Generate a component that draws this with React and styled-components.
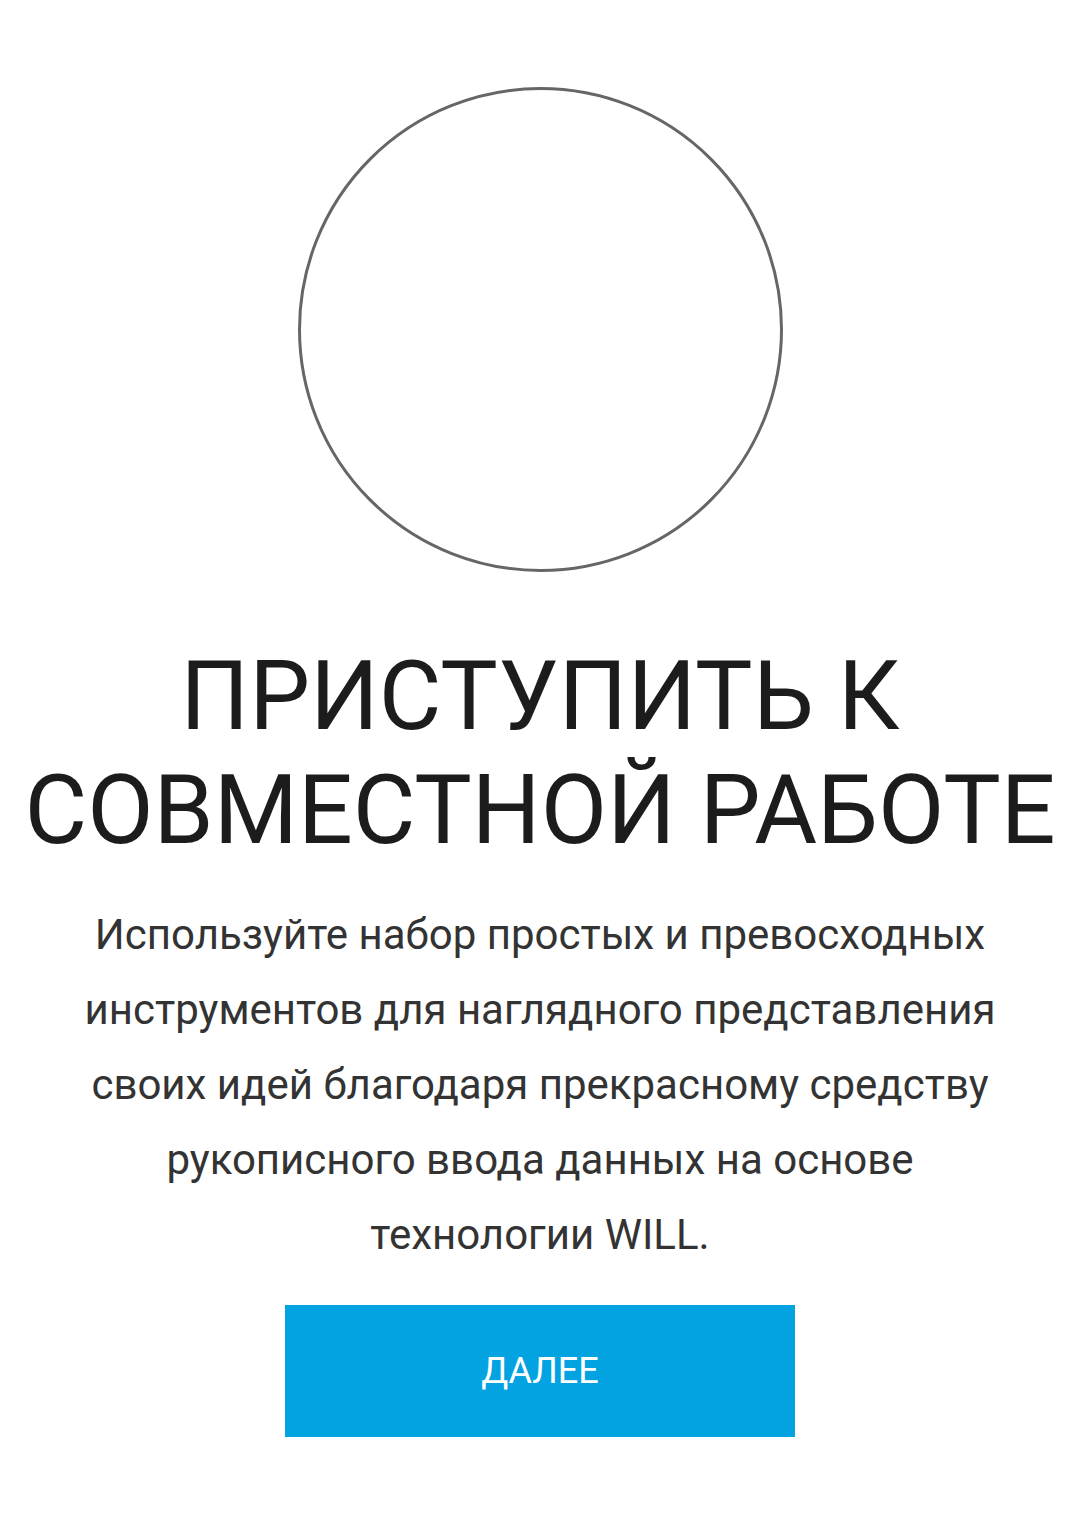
import React from "react";
import styled, { createGlobalStyle } from "styled-components";

const GlobalStyle = createGlobalStyle`
    html, body {
        margin: 0;
        padding: 0;
        background: #ffffff;
    }
    body {
        font-family: Roboto, "Noto Sans", "Liberation Sans", sans-serif;
    }
`;

const Screen = styled.div`
    width: 1080px;
    min-height: 1533px;
    display: flex;
    flex-direction: column;
    align-items: center;
    padding-top: 87px;
    box-sizing: border-box;
`;

const Avatar = styled.div`
    width: 485px;
    height: 485px;
    border-radius: 50%;
    border: 3px solid #666666;
    box-sizing: border-box;
`;

const Title = styled.h1`
    margin: 67px 0 0;
    font-size: 96.5px;
    line-height: 114px;
    font-weight: 400;
    color: #1c1c1c;
    text-align: center;
    white-space: nowrap;
`;

const Description = styled.p`
    margin: 30px 0 0;
    font-size: 42px;
    line-height: 75px;
    color: #333333;
    text-align: center;
    white-space: nowrap;
`;

const NextButton = styled.button`
    margin-top: 33px;
    width: 510px;
    height: 132px;
    border: none;
    background: #03a3e1;
    color: #ffffff;
    font-family: Roboto, "Noto Sans", sans-serif;
    font-size: 36px;
    text-transform: uppercase;
    cursor: pointer;
`;

const lines = [
    "Используйте набор простых и превосходных",
    "инструментов для наглядного представления",
    "своих идей благодаря прекрасному средству",
    "рукописного ввода данных на основе",
    "технологии WILL.",
];

const App = () => {
    return (
        <Screen>
            <GlobalStyle />
            <Avatar />
            <Title>
                ПРИСТУПИТЬ К
                <br />
                СОВМЕСТНОЙ РАБОТЕ
            </Title>
            <Description>
                {lines.map((line, i) => (
                    <React.Fragment key={i}>
                        {line}
                        {i < lines.length - 1 && <br />}
                    </React.Fragment>
                ))}
            </Description>
            <NextButton>Далее</NextButton>
        </Screen>
    );
};

export default App;
